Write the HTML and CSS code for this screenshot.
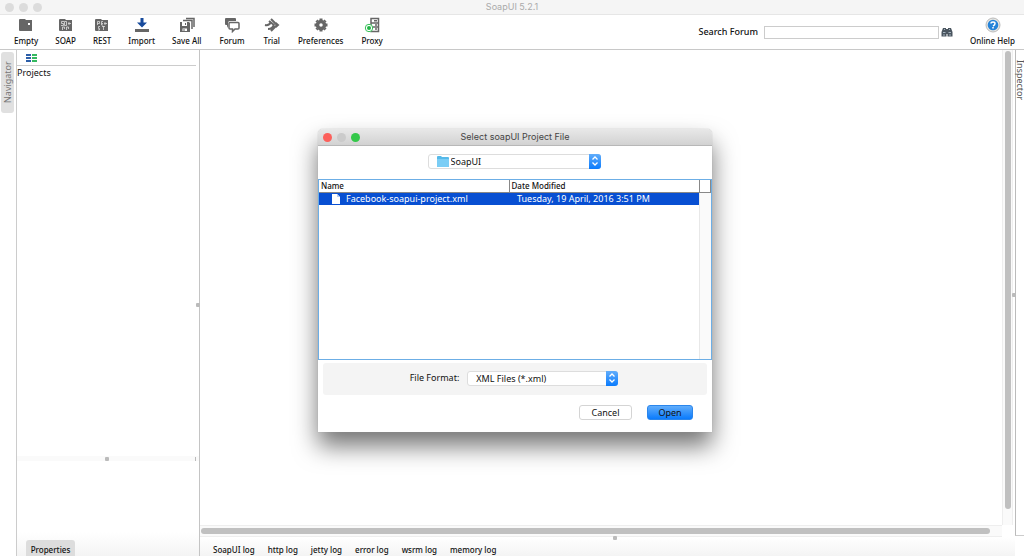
FILE: index.html
```html
<!DOCTYPE html>
<html lang="en">
<head>
<meta charset="utf-8">
<title>SoapUI 5.2.1</title>
<link rel="stylesheet" href="styles.css">
</head>
<body>
<div class="app">
  <header class="titlebar">
    <div class="lights"><span class="light"></span><span class="light"></span><span class="light"></span></div>
    <h1 class="titlebar-text">SoapUI 5.2.1</h1>
  </header>

  <div class="toolbar">
    <button class="tool"><svg class="icon" viewBox="0 0 16 16"><path fill="#666" d="M1 3q0-1 1-1h5l1 1h6v11H2q-1 0-1-1z"/><path fill="#fff" d="M10 6h2v2h-2z"/></svg>Empty</button>
    <button class="tool"><svg class="icon" viewBox="0 0 16 16"><path fill="#666" d="M1 3q0-1 1-1h5l1 1h6v11H2q-1 0-1-1z"/><path fill="none" stroke="#ddd" stroke-width=".8" d="M6 4.500H3.500v2h2v2H3M8.500 4.500v4h-2v-4zM4.500 13v-3h2v2M8.500 13v-3h2v2M11 5v3M10 6.500h3"/></svg>SOAP</button>
    <button class="tool"><svg class="icon" viewBox="0 0 16 16"><path fill="#666" d="M1 3q0-1 1-1h5l1 1h6v11H2q-1 0-1-1z"/><path fill="none" stroke="#ddd" stroke-width=".8" d="M3.500 8V4.500h2v2h-2M9 4.500H7.500V8H9M7.500 6.500H9M6 9.500H4.500v2h1V13H4M8 9.500h3M9.500 9v4M11 5v3M10 6.500h3"/></svg>REST</button>
    <button class="tool"><svg class="icon" viewBox="0 0 16 16"><path fill="#174a9c" d="M6.500 1h3v4.500H13l-5 5-5-5h3.500z"/><path fill="#666" d="M1 12h14v3H1z"/></svg>Import</button>
    <button class="tool"><svg class="icon" viewBox="0 0 16 16"><path fill="none" stroke="#666" stroke-width="1.500" d="M7 1.500h8V10M4 3.500h9V12"/><path fill="#666" d="M1 5h9l1 1v9H1z"/><path fill="#fff" d="M3 5h5v4H3zM3.500 11.500H8V14H3.500z"/><path fill="#666" d="M6 6h1v2H6zM4.500 12h1v2h-1z"/></svg>Save All</button>
    <button class="tool tool-wide"><svg class="icon" viewBox="0 0 16 16"><path fill="#666" d="M2 1h9q1 0 1 1v2H6q-2 0-2 2v3L3 11V8H2Q1 8 1 7V2q0-1 1-1z"/><path fill="#fff" stroke="#666" stroke-width="1.500" d="M6 5.500h8q1 0 1 1V11q0 1-1 1h-3l-2.500 2.500V12H6q-1 0-1-1V6.500q0-1 1-1z"/></svg>Forum</button>
    <button class="tool tool-wide"><svg class="icon" viewBox="0 0 16 16"><path fill="none" stroke="#666" stroke-width="2" d="M7 2l6 6-6 6M1 8q4 1 6-3M4 12q5 0 6-5M5 4l5 4"/><path fill="#666" d="M12 5l3.500 3L12 11z"/></svg>Trial</button>
    <button class="tool"><svg class="icon" viewBox="0 0 16 16"><circle cx="8" cy="8" r="3.500" fill="none" stroke="#666" stroke-width="3.500"/><path stroke="#666" stroke-width="3" d="M8 1.500v2M8 12.500v2M1.500 8h2M12.500 8h2M3.500 3.500l1 1M11.500 11.500l1 1M12.500 3.500l-1 1M4.500 11.500l-1 1"/></svg>Preferences</button>
    <button class="tool tool-wide"><svg class="icon" viewBox="0 0 16 16"><path fill="#fff" stroke="#666" stroke-width="1.500" d="M7 1.500h7.500v13H7zM7 6h7.500M7 10h7.500"/><path stroke="#666" stroke-width="1.500" d="M10 3.700h3M11 8h2M11 12h2"/><circle cx="5" cy="11" r="3.700" fill="#fff" stroke="#36c158"/><circle cx="5" cy="11" r="2" fill="#22b546"/></svg>Proxy</button>
    <div class="search">
      <label for="forum-search">Search Forum</label>
      <input id="forum-search" class="search-input" type="text">
      <button class="search-button" aria-label="Search"><svg viewBox="0 0 12 10"><path fill="#4a555f" d="M2 1h3v1h2V1h3l1.500 4v4.500h-5V7h-1v2.500h-5V5z"/><path fill="#a5b4c0" d="M2 5h2.500v1H2zM7.500 5H10v1H7.500zM3 2h1v1H3zM8 2h1v1H8zM2 7.500h2v1H2zM8 7.500h2v1H8z"/></svg></button>
    </div>
    <button class="tool"><svg class="icon" viewBox="0 0 16 16"><circle cx="8" cy="8" r="7" fill="#e6e6e2" stroke="#bbb"/><circle cx="8" cy="8" r="5.300" fill="#2583d8"/><path fill="none" stroke="#fff" stroke-width="1.500" d="M6 6.500Q6 5 8 5t2 1.500T8 9M8 10v1.500"/></svg>Online Help</button>
  </div>

  <div class="workspace">
    <aside class="rail rail-left"><button class="side-tab side-tab-nav">Navigator</button></aside>
    <nav class="navigator">
      <div class="nav-tools"><svg class="list-icon" viewBox="0 0 11 8"><path fill="#2c5ea8" d="M0 0h5v2H0zM0 3h5v2H0zM0 6h5v2H0z"/><path fill="#35b860" d="M6 0h5v2H6zM6 3h5v2H6zM6 6h5v2H6z"/></svg></div>
      <div class="projects">Projects</div>
      <div class="split-h"><span class="grip"></span><span class="tick"></span></div>
      <div class="properties"><button class="properties-tab">Properties</button></div>
      <span class="grip grip-nav"></span>
    </nav>
    <div class="center">
      <div class="desk">
        <main class="canvas"></main>
        <div class="scroll-v"><span class="thumb-v"></span></div>
        <div class="scroll-h"><span class="thumb-h"></span></div>
      </div>
      <div class="logs">
        <button class="log">SoapUI log</button><button class="log">http log</button><button class="log">jetty log</button><button class="log">error log</button><button class="log">wsrm log</button><button class="log">memory log</button>
        <span class="grip grip-logs"></span>
      </div>
    </div>
    <aside class="rail rail-right"><button class="side-tab side-tab-inspector">Inspector</button><span class="grip grip-inspector"></span></aside>
  </div>
</div>

<section class="dialog" role="dialog" aria-labelledby="dialog-title">
  <header class="dialog-bar">
    <div class="lights"><span class="light light-red"></span><span class="light light-off"></span><span class="light light-green"></span></div>
    <h2 class="dialog-title" id="dialog-title">Select soapUI Project File</h2>
  </header>
  <div class="folder-row">
    <div class="picker picker-folder">
      <svg class="folder" viewBox="0 0 12 11"><path fill="#55b9e9" d="M0 1q0-1 1-1h3l1 1h6q1 0 1 1v8q0 1-1 1H1q-1 0-1-1z"/><path fill="#7acdf5" d="M0 3h12v7q0 1-1 1H1q-1 0-1-1z"/></svg>
      <select class="select" aria-label="Folder"><option>SoapUI</option></select>
      <span class="stepper"><svg viewBox="0 0 12 14"><path fill="none" stroke="#fff" stroke-width="1.300" d="M3.500 5.500L6 3l2.500 2.500M3.500 8.500L6 11l2.500-2.500"/></svg></span>
    </div>
  </div>
  <div class="files">
    <table class="file-table">
      <colgroup><col class="col-name"><col><col class="col-end"></colgroup>
      <thead><tr><th>Name</th><th>Date Modified</th><th></th></tr></thead>
      <tbody><tr><td class="selected cell-name"><span class="file-name"><svg class="file-icon" viewBox="0 0 8 10"><path fill="#fff" d="M0 0h5l3 3v7H0z"/><path fill="#b9cdf3" d="M5 0v3h3z"/></svg>Facebook-soapui-project.xml</span></td><td class="selected cell-date">Tuesday, 19 April, 2016 3:51 PM</td><td class="gutter"></td></tr>
      <tr class="filler"><td></td><td></td><td class="gutter"></td></tr></tbody>
    </table>
  </div>
  <div class="format">
    <label for="format">File Format:</label>
    <div class="picker picker-format">
      <select class="select" id="format"><option>XML Files (*.xml)</option></select>
      <span class="stepper"><svg viewBox="0 0 12 14"><path fill="none" stroke="#fff" stroke-width="1.300" d="M3.500 5.500L6 3l2.500 2.500M3.500 8.500L6 11l2.500-2.500"/></svg></span>
    </div>
  </div>
  <div class="actions">
    <button class="action">Cancel</button>
    <button class="action action-primary">Open</button>
  </div>
</section>
</body>
</html>
```
FILE: styles.css
```css
* { box-sizing: border-box; }
html, body { height: 100%; margin: 0; }
body { overflow: hidden; background: #fff; color: #111; font-family: "Noto Sans", "Open Sans", sans-serif; font-size: 9px; line-height: 12px; }
button, input, select { font: inherit; color: inherit; margin: 0; padding: 0; border: 0; background: none; }
svg { display: block; }
.app { height: 100%; display: flex; flex-direction: column; }

.titlebar { position: relative; height: 15px; flex: none; display: flex; align-items: center; padding: 0 5px; background: #f5f5f5; border-bottom: 1px solid #e6e6e6; }
.lights { position: absolute; display: flex; gap: 5px; }
.light { width: 9px; height: 9px; border-radius: 50%; background: #dcdcdc; }
.titlebar-text { flex: 1; margin: 0; text-align: center; font-family: Inter, "Liberation Sans", sans-serif; font-size: 9px; font-weight: 400; color: #aaa; }

.toolbar { flex: none; height: 35px; display: flex; align-items: center; gap: 17px; padding: 0 9px 0 14px; border-bottom: 1px solid #c8c8c8; }
.tool { display: flex; flex-direction: column; align-items: center; gap: 2px; font-size: 8px; font-weight: 500; line-height: 12px; white-space: nowrap; }
.tool-wide { padding: 0 1px; }
.icon { width: 16px; height: 16px; }
.search { margin-left: auto; display: flex; align-items: center; gap: 2px; font-weight: 500; }
.search-input { width: 175px; height: 13px; margin-left: 4px; border: 1px solid #ccc; background: #fff; }
.search-button { width: 12px; height: 10px; }

.workspace { flex: 1; min-height: 0; display: flex; }
.rail { flex: none; position: relative; }
.rail-left { width: 17px; padding: 2px 0 0 1px; border-right: 1px solid #ccc; }
.rail-right { width: 9px; margin-bottom: 20px; padding-top: 10px; border-left: 1px solid #bbb; border-bottom: 1px solid #ccc; }
.side-tab { writing-mode: vertical-rl; color: #777; line-height: 13px; }
.side-tab-nav { width: 13px; height: 61px; transform: rotate(180deg); background: #e0e0e0; border-radius: 3px; text-align: center; }
.side-tab-inspector { width: 8px; line-height: 8px; color: #555; }
.navigator { position: relative; flex: none; width: 183px; display: flex; flex-direction: column; border-right: 1px solid #c4c4c4; }
.nav-tools { height: 16px; margin-right: 3px; padding: 4px 9px; border-bottom: 1px solid #ccc; }
.list-icon { width: 11px; height: 8px; }
.projects { flex: 1; padding-top: 1px; }
.split-h { height: 5px; display: flex; align-items: center; padding: 0 3px 0 88px; background: #fafafa; }
.grip { width: 4px; height: 4px; background: #bbb; border-radius: 1px; }
.tick { width: 1px; height: 4px; margin-left: auto; background: #bbb; }
.grip-nav { position: absolute; right: -1px; top: 50%; }
.properties { height: 95px; flex: none; display: flex; align-items: flex-end; padding-left: 9px; background: linear-gradient(#fff 75%, #f4f4f4); }
.properties-tab { height: 16px; width: 49px; padding-top: 3px; background: #ddd; border-radius: 3px 3px 0 0; font-size: 8px; font-weight: 500; line-height: 12px; }

.center { flex: 1; min-width: 0; display: flex; flex-direction: column; }
.desk { flex: 1; display: grid; grid-template: 1fr 12px / 1fr 11px; margin-right: 2px; }
.scroll-v { border: solid #eee; border-width: 0 1px; background: #fafafa; padding: 1px 1px 16px 2px; }
.thumb-v, .thumb-h { display: block; height: 100%; border-radius: 3px; background: #c0c0c0; }
.thumb-v { width: 6px; }
.scroll-h { border: solid #eee; border-width: 1px 0; background: #fafafa; padding: 2px 12px 2px 1px; }
.logs { position: relative; height: 19px; flex: none; display: flex; align-items: center; gap: 13px; padding: 7px 0 0 13px; background: linear-gradient(#fff, #f4f4f4); }
.log { font-size: 8px; font-weight: 500; line-height: 12px; white-space: nowrap; }
.grip-logs { position: absolute; left: calc(50% + 5px); top: -1px; }
.grip-inspector { position: absolute; left: -4px; top: 50%; }

.dialog { position: absolute; left: 318px; top: 129px; width: 394px; background: #fff; border-radius: 5px 5px 0 0; box-shadow: 0 0 1px #999, 0 14px 24px rgba(0, 0, 0, .55); }
.dialog-bar { position: relative; height: 17px; display: flex; align-items: center; padding: 0 5px; background: linear-gradient(#e8e8e8, #d2d2d2); border-bottom: 1px solid #b8b8b8; border-radius: 5px 5px 0 0; }
.light-red { background: #fc605b; }
.light-off { background: #cbcbcb; }
.light-green { background: #34c84a; }
.dialog-title { flex: 1; margin: 0; text-align: center; font-family: Inter, "Liberation Sans", sans-serif; font-size: 9px; font-weight: 400; color: #444; }
.folder-row { height: 33px; display: flex; justify-content: center; align-items: center; padding: 0 2px 2px 0; }
.picker { position: relative; display: flex; align-items: center; height: 15px; border: 1px solid #ddd; border-radius: 3px; background: #fff; }
.picker-folder { width: 173px; padding-left: 8px; gap: 2px; }
.picker-format { width: 151px; padding-left: 8px; }
.folder { width: 12px; height: 11px; }
.select { flex: 1; min-width: 0; appearance: none; line-height: 13px; outline: 0; }
.stepper { position: absolute; right: -1px; top: -1px; width: 12px; height: 15px; border-radius: 0 3px 3px 0; background: linear-gradient(#61adfb, #0a7bfd); pointer-events: none; }
.files { height: 181px; border: 1px solid #6caee6; }
.file-table { width: 100%; height: 100%; border-collapse: collapse; table-layout: fixed; }
.col-name { width: 190px; }
.col-end { width: 11px; }
.file-table th { height: 12px; padding: 0 2px; text-align: left; font-size: 8px; font-weight: 500; line-height: 11px; border-right: 1px solid #888; border-bottom: 1px solid #888; }
.file-table td { padding: 0; }
.selected { height: 12px; background: #084fd2; color: #fff; white-space: nowrap; }
.file-table .cell-name { padding-left: 13px; }
.file-table .cell-date { padding-left: 8px; }
.file-name { display: flex; align-items: center; gap: 6px; }
.file-icon { width: 8px; height: 10px; }
.gutter { background: #fafafa; border-left: 1px solid #e8e8e8; }
.format { display: flex; align-items: center; justify-content: center; gap: 8px; height: 32px; margin: 3px 5px 0; padding: 0 2px 2px 0; background: #f4f4f4; border-radius: 3px; }
.actions { display: flex; justify-content: flex-end; gap: 15px; padding: 10px 19px 12px; }
.action { width: 53px; height: 15px; border: 1px solid #d4d4d4; border-radius: 3px; background: #fff; line-height: 12px; }
.action-primary { width: 46px; border-color: #2b86ec; background: linear-gradient(#61adfb, #0a7bfd); }
```
